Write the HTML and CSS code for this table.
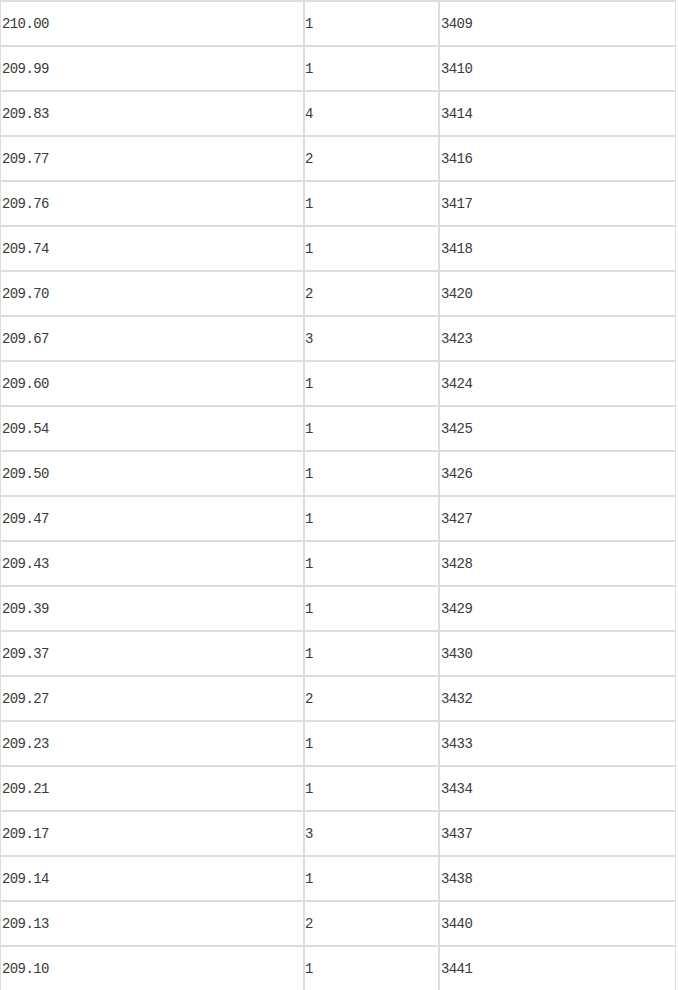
FILE: index.html
```html
<!DOCTYPE html>
<html lang="zh">
<head>
<meta charset="utf-8">
<title>价格表</title>
<link rel="stylesheet" href="styles.css">
</head>
<body>
<table class="price-table">
<colgroup>
<col class="c-price">
<col class="c-count">
<col class="c-total">
</colgroup>
<tbody>
<tr><td>210.00</td><td>1</td><td>3409</td></tr>
<tr><td>209.99</td><td>1</td><td>3410</td></tr>
<tr><td>209.83</td><td>4</td><td>3414</td></tr>
<tr><td>209.77</td><td>2</td><td>3416</td></tr>
<tr><td>209.76</td><td>1</td><td>3417</td></tr>
<tr><td>209.74</td><td>1</td><td>3418</td></tr>
<tr><td>209.70</td><td>2</td><td>3420</td></tr>
<tr><td>209.67</td><td>3</td><td>3423</td></tr>
<tr><td>209.60</td><td>1</td><td>3424</td></tr>
<tr><td>209.54</td><td>1</td><td>3425</td></tr>
<tr><td>209.50</td><td>1</td><td>3426</td></tr>
<tr><td>209.47</td><td>1</td><td>3427</td></tr>
<tr><td>209.43</td><td>1</td><td>3428</td></tr>
<tr><td>209.39</td><td>1</td><td>3429</td></tr>
<tr><td>209.37</td><td>1</td><td>3430</td></tr>
<tr><td>209.27</td><td>2</td><td>3432</td></tr>
<tr><td>209.23</td><td>1</td><td>3433</td></tr>
<tr><td>209.21</td><td>1</td><td>3434</td></tr>
<tr><td>209.17</td><td>3</td><td>3437</td></tr>
<tr><td>209.14</td><td>1</td><td>3438</td></tr>
<tr><td>209.13</td><td>2</td><td>3440</td></tr>
<tr><td>209.10</td><td>1</td><td>3441</td></tr>
</tbody>
</table>
</body>
</html>
```

FILE: styles.css
```css
html, body {
  margin: 0;
  padding: 0;
  background: #ffffff;
}

body {
  font-family: "Liberation Mono", "Noto Sans CJK SC", monospace;
  font-size: 14px;
  letter-spacing: -0.6px;
  color: #3a3a3a;
}

.price-table {
  width: 676px;
  table-layout: fixed;
  border-collapse: separate;
  border-spacing: 0;
  border-top: 1px solid #dddddd;
}

.c-price { width: 304px; }
.c-count { width: 135px; }
.c-total { width: 237px; }

.price-table td {
  height: 42px;
  padding: 1px 0 0 1px;
  border: 1px solid #dddddd;
  vertical-align: middle;
  text-align: left;
  line-height: 16px;
  white-space: nowrap;
}

.price-table td:nth-child(2) {
  padding-left: 0;
}
```
